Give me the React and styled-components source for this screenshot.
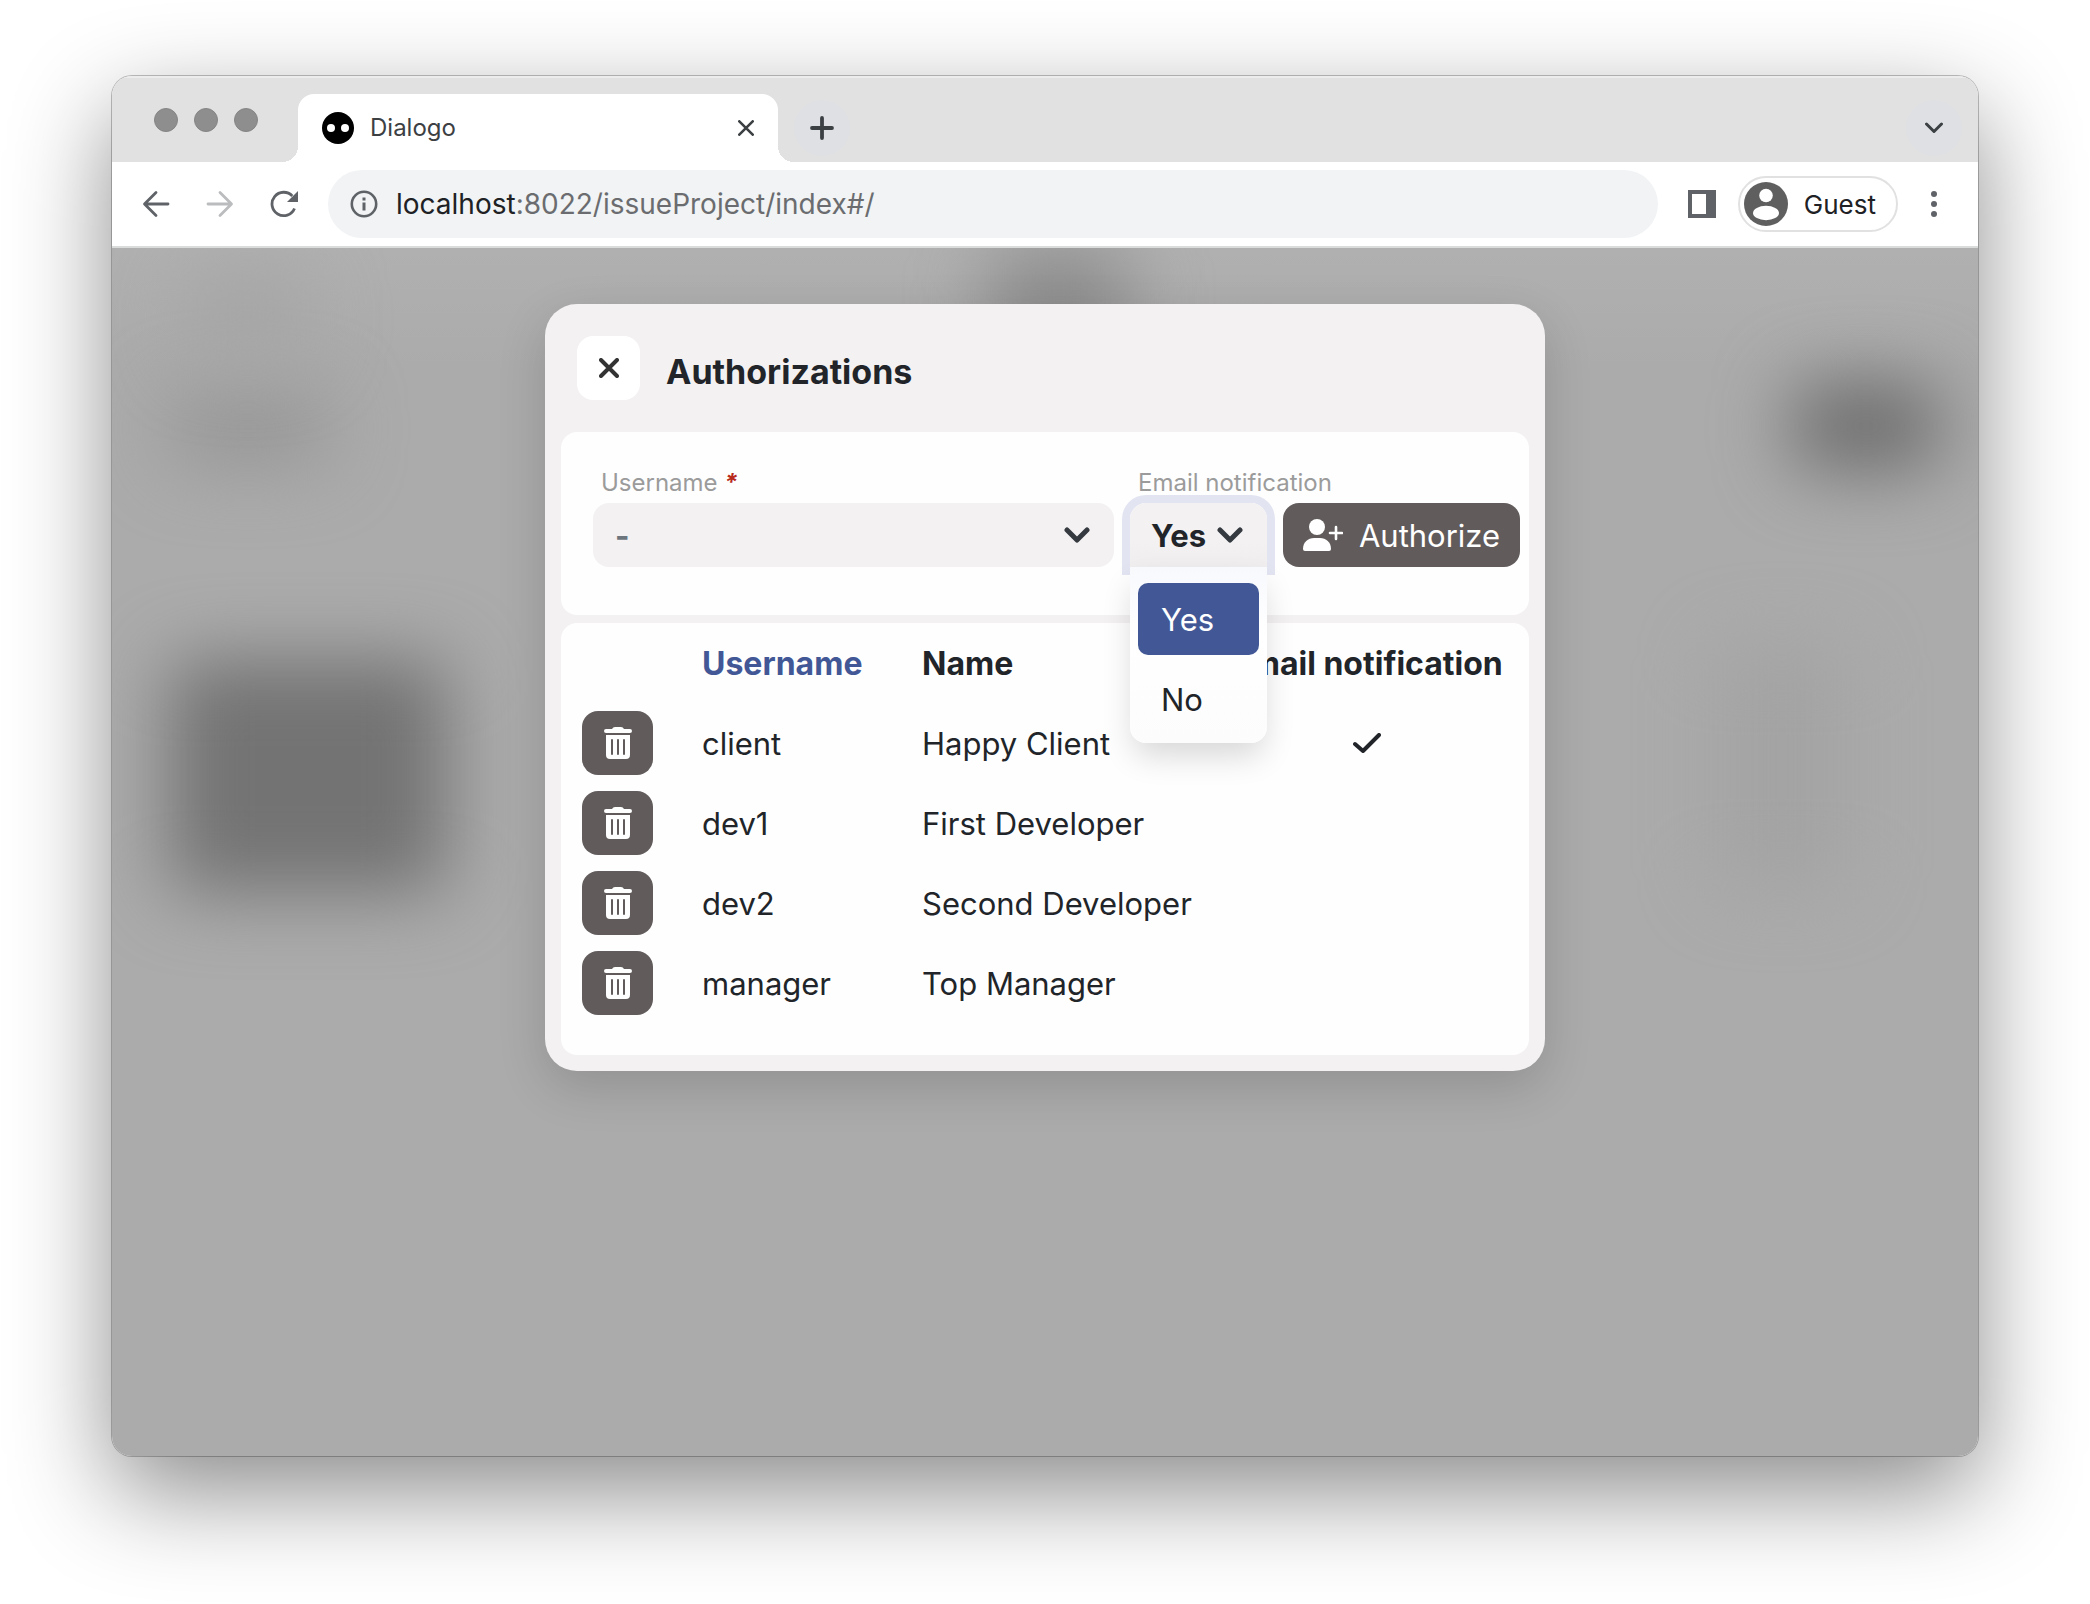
import React, { useState } from "react";
import styled, { createGlobalStyle } from "styled-components";

const GlobalStyle = createGlobalStyle`
  *, *::before, *::after { box-sizing: border-box; }
  body {
    margin: 0;
    background: #fff;
    color: #212529;
    font-family: Inter, "Liberation Sans", sans-serif;
    font-size: 31px;
    line-height: 48px;
  }
  button, select, input { font: inherit; color: inherit; border: 0; margin: 0; padding: 0; background: none; }
  svg { display: block; flex: none; }
`;

const Desktop = styled.div`
  min-height: 100vh;
  padding: 76px 112px 148px;
  display: flex;
  flex-direction: column;
  overflow: hidden;
`;

const Window = styled.div`
  flex: 1;
  display: flex;
  flex-direction: column;
  border-radius: 20px;
  overflow: hidden;
  box-shadow: 0 0 0 1px rgba(0, 0, 0, 0.24), 0 36px 100px rgba(0, 0, 0, 0.46);
`;

const TabStrip = styled.div`
  display: flex;
  align-items: flex-end;
  height: 86px;
  padding-right: 16px;
  background: #e1e1e1;
  box-shadow: inset 0 2px 0 #ececec;
`;

const Lights = styled.div`
  display: flex;
  gap: 16px;
  width: 186px;
  padding: 0 0 30px 42px;
`;

const Light = styled.span`
  width: 24px;
  height: 24px;
  border-radius: 50%;
  background: #8e8e8e;
  border: 1px solid #858585;
`;

const Tab = styled.div`
  position: relative;
  display: flex;
  align-items: center;
  gap: 16px;
  width: 480px;
  height: 68px;
  padding: 0 16px 0 24px;
  border-radius: 16px 16px 0 0;
  background: #fff;
  &::before, &::after {
    content: "";
    position: absolute;
    bottom: 0;
    width: 16px;
    height: 16px;
  }
  &::before { right: 100%; background: radial-gradient(circle at 0 0, transparent 16px, #fff 16px); }
  &::after { left: 100%; background: radial-gradient(circle at 100% 0, transparent 16px, #fff 16px); }
`;

const TabTitle = styled.span`
  flex: 1;
  font-size: 24px;
  color: #3c4043;
`;

const RoundButton = styled.button`
  display: grid;
  place-items: center;
  width: ${(p) => p.$size}px;
  height: ${(p) => p.$size}px;
  border-radius: 50%;
  background: ${(p) => p.$fill || "transparent"};
  color: ${(p) => p.$color || "#5f6368"};
`;

const StripActions = styled.div`
  flex: 1;
  display: flex;
  align-items: center;
  justify-content: space-between;
  height: 68px;
  padding-left: 16px;
`;

const Toolbar = styled.div`
  display: flex;
  align-items: center;
  height: 86px;
  padding: 0 16px 2px;
  background: #fff;
  box-shadow: inset 0 -2px 0 #dadcdc;
`;

const NavButtons = styled.div`
  display: flex;
  gap: 8px;
  margin-right: 16px;
`;

const AddressBar = styled.div`
  flex: 1;
  display: flex;
  align-items: center;
  gap: 18px;
  height: 68px;
  padding: 0 22px;
  border-radius: 34px;
  background: #f1f3f4;
  color: #5f6368;
`;

const Address = styled.span`
  font-size: 28px;
  color: #6b6c6f;
  b { font-weight: 400; color: #202124; }
`;

const ToolbarEnd = styled.div`
  display: flex;
  align-items: center;
  margin-left: 16px;
  gap: 8px;
`;

const Profile = styled.button`
  display: flex;
  align-items: center;
  gap: 16px;
  height: 56px;
  padding: 0 20px 0 4px;
  border: 2px solid #e1e1e1;
  border-radius: 28px;
  font-size: 26px;
  color: #202124;
`;

const Page = styled.main`
  position: relative;
  flex: 1;
  display: flex;
  flex-direction: column;
  align-items: center;
  padding: 56px 32px;
  background: linear-gradient(#b0b0b0, #ababab 120px);
  overflow: hidden;
  isolation: isolate;
`;

const Blob = styled.span`
  position: absolute;
  z-index: -1;
  left: ${(p) => p.$x}%;
  top: ${(p) => p.$y}%;
  width: ${(p) => p.$w}px;
  height: ${(p) => p.$h}px;
  border-radius: 24px;
  background: ${(p) => p.$fill};
  filter: blur(36px);
`;

const Dialog = styled.section`
  width: 1000px;
  max-width: 100%;
  padding: 0 16px 16px;
  border-radius: 32px;
  background: #f3f1f2;
  box-shadow: 0 16px 48px rgba(0, 0, 0, 0.15);
`;

const DialogHeader = styled.header`
  display: flex;
  align-items: center;
  gap: 26px;
  padding: 32px 16px;
`;

const CloseButton = styled.button`
  display: grid;
  place-items: center;
  width: 63px;
  height: 64px;
  border-radius: 16px;
  background: #fff;
  color: #333;
`;

const Title = styled.h1`
  margin: 0;
  padding-top: 8px;
  font-size: 34px;
  font-weight: 700;
  line-height: 48px;
`;

const Card = styled.div`
  border-radius: 16px;
  background: #fefefe;
  padding: ${(p) => p.$pad};
  & + & { margin-top: 8px; }
`;

const FormRow = styled.form`
  display: flex;
  align-items: flex-end;
  gap: 16px;
`;

const Field = styled.div`
  position: relative;
  flex: ${(p) => (p.$grow ? "1" : "none")};
  width: ${(p) => (p.$width ? p.$width + "px" : "auto")};
  min-width: 0;
`;

const FieldLabel = styled.label`
  display: block;
  padding: 0 8px;
  font-size: 24px;
  line-height: 40px;
  color: #9b9b9b;
  white-space: nowrap;
`;

const Required = styled.i`
  font-weight: 700;
  color: #b82a1c;
`;

const SelectBox = styled.div`
  display: flex;
  align-items: center;
  position: relative;
  svg { position: absolute; right: 24px; pointer-events: none; }
`;

const Select = styled.select`
  appearance: none;
  width: 100%;
  height: 64px;
  padding: 2px 56px 0 22px;
  border-radius: 16px;
  background: #f3f1f2;
  color: #6c757d;
  font-weight: 700;
`;

const MenuButton = styled.button`
  display: flex;
  align-items: center;
  justify-content: space-between;
  width: 100%;
  height: 64px;
  padding: 0 24px 0 21px;
  border-radius: 16px 16px 0 0;
  background: linear-gradient(#f3f1f2 60%, #efedee);
  box-shadow: 0 0 0 8px #e2e5f1;
  font-weight: 700;
`;

const ButtonText = styled.span`
  padding-top: 2px;
`;

const Menu = styled.ul`
  position: absolute;
  z-index: 2;
  top: 100%;
  left: 0;
  right: 0;
  display: flex;
  flex-direction: column;
  gap: 8px;
  margin: 0;
  padding: 16px 8px 8px;
  list-style: none;
  border-radius: 0 0 16px 16px;
  background: linear-gradient(#f8f9fd, #fff 40%, #fcfcfc);
  box-shadow: 0 16px 32px -4px rgba(0, 0, 0, 0.16);
`;

const Option = styled.li`
  padding: 13px 23px 11px;
  border-radius: 10px;
  background: ${(p) => (p.$active ? "#425896" : "transparent")};
  color: ${(p) => (p.$active ? "#fff" : "#212529")};
`;

const DarkButton = styled.button`
  display: flex;
  align-items: center;
  justify-content: center;
  gap: 16px;
  height: 64px;
  width: ${(p) => p.$width}px;
  border-radius: 16px;
  background: #615b5b;
  color: #fff;
`;

const Table = styled.table`
  width: 100%;
  border-collapse: collapse;
  table-layout: fixed;
`;

const Row = styled.tr`
  height: 80px;
`;

const Col = styled.col`
  width: ${(p) => (p.$width ? p.$width + "px" : "auto")};
`;

const HeadCell = styled.th`
  padding: 2px 16px 0;
  text-align: ${(p) => (p.$center ? "center" : "left")};
  font-size: 32px;
  font-weight: 700;
  white-space: nowrap;
  color: ${(p) => (p.$sorted ? "#425896" : "#212529")};
`;

const Cell = styled.td`
  padding: ${(p) => (p.$text ? "2px 16px 0" : "0 16px")};
  white-space: nowrap;
  svg { margin: 0 auto; }
`;

const Icon = ({ w = 32, h = w, box, stroke, sw = 2, children }) => (
  <svg width={w} height={h} viewBox={box || `0 0 ${w} ${h}`} fill={stroke ? "none" : "currentColor"}
    stroke={stroke ? "currentColor" : "none"} strokeWidth={sw} strokeLinecap="round" strokeLinejoin="round" aria-hidden="true">
    {children}
  </svg>
);

const Chevron = () => (
  <Icon w={26} h={16} stroke sw={5}><path d="M3 3l10 10 10-10" stroke="#343a40" /></Icon>
);

const TrashIcon = () => (
  <Icon w={28} h={32}>
    <path fillRule="evenodd" d="M2 2H8Q9 0 11 0H17Q19 0 20 2H26A2 2 0 0 1 26 6H2A2 2 0 0 1 2 2Z
      M2 8H26V28A4 4 0 0 1 22 32H6A4 4 0 0 1 2 28Z
      M7 13V27A1 1 0 0 0 9 27V13A1 1 0 0 0 7 13Z M13 13V27A1 1 0 0 0 15 27V13A1 1 0 0 0 13 13Z M19 13V27A1 1 0 0 0 21 27V13A1 1 0 0 0 19 13Z" />
  </Icon>
);

const PersonPlusIcon = () => (
  <Icon w={40} h={32}>
    <circle cx="14" cy="8" r="8" />
    <path d="M2 32Q0 32 0 30C0 23 5 19 11 19H17C23 19 28 23 28 30Q28 32 26 32Z" />
    <path d="M33 8v12M27 14h12" stroke="currentColor" strokeWidth="2.6" />
  </Icon>
);

const users = [
  { username: "client", name: "Happy Client", email: true },
  { username: "dev1", name: "First Developer", email: false },
  { username: "dev2", name: "Second Developer", email: false },
  { username: "manager", name: "Top Manager", email: false },
];

function BrowserChrome() {
  return (
    <>
      <TabStrip>
        <Lights><Light /><Light /><Light /></Lights>
        <Tab>
          <Icon w={32}>
            <circle cx="16" cy="16" r="16" fill="#000" />
            <circle cx="9" cy="16" r="4" fill="#fff" />
            <circle cx="23" cy="16" r="4" fill="#fff" />
          </Icon>
          <TabTitle>Dialogo</TabTitle>
          <RoundButton $size={32} $color="#3c4043" aria-label="Close tab">
            <Icon w={16} stroke sw={2.6}><path d="M1.3 1.3l13.4 13.4M14.7 1.3L1.3 14.7" /></Icon>
          </RoundButton>
        </Tab>
        <StripActions>
          <RoundButton $size={56} $fill="#dee0e4" $color="#3c4043" aria-label="New tab">
            <Icon w={24} stroke sw={3.8}><path d="M12 2v20M2 12h20" /></Icon>
          </RoundButton>
          <RoundButton $size={56} $fill="#dee0e4" $color="#3c4043" aria-label="Search tabs">
            <Icon w={20} h={12} stroke sw={3}><path d="M2.5 2l7.500 7.500L17.500 2" /></Icon>
          </RoundButton>
        </StripActions>
      </TabStrip>
      <Toolbar>
        <NavButtons>
          <RoundButton $size={56} aria-label="Back">
            <Icon w={28} stroke sw={2.8}><path d="M26 14H3M14 2.500L2.500 14 14 25.500" /></Icon>
          </RoundButton>
          <RoundButton $size={56} $color="#babcbe" aria-label="Forward">
            <Icon w={28} stroke sw={2.8}><path d="M2 14h23M14 2.500L25.500 14 14 25.500" /></Icon>
          </RoundButton>
          <RoundButton $size={56} aria-label="Reload">
            <Icon w={28} h={28}>
              <path d="M24.500 18.500A11.700 11.700 0 1 1 22.300 6" fill="none" stroke="currentColor" strokeWidth="2.8" strokeLinecap="butt" />
              <path d="M28 1v11H17z" />
            </Icon>
          </RoundButton>
        </NavButtons>
        <AddressBar>
          <Icon w={28}>
            <circle cx="14" cy="14" r="12.200" fill="none" stroke="currentColor" strokeWidth="2.600" />
            <path d="M12.500 7.500h3v3h-3zM12.500 12.500h3v8h-3z" />
          </Icon>
          <Address><b>localhost</b>:8022/issueProject/index#/</Address>
        </AddressBar>
        <ToolbarEnd>
          <RoundButton $size={56} aria-label="Side panel">
            <Icon w={28}><path fillRule="evenodd" d="M0 0H28V28H0ZM4 4V24H18V4Z" /></Icon>
          </RoundButton>
          <Profile>
            <Icon w={44}>
              <circle cx="22" cy="22" r="22" fill="#5f5f5f" />
              <circle cx="22" cy="13.500" r="6.800" fill="#fff" />
              <ellipse cx="22" cy="31" rx="13" ry="7.200" fill="#fff" />
            </Icon>
            <ButtonText>Guest</ButtonText>
          </Profile>
          <RoundButton $size={56} aria-label="Menu">
            <Icon w={6} h={26}><circle cx="3" cy="3" r="3" /><circle cx="3" cy="13" r="3" /><circle cx="3" cy="23" r="3" /></Icon>
          </RoundButton>
        </ToolbarEnd>
      </Toolbar>
    </>
  );
}

export default function App() {
  const [email, setEmail] = useState("Yes");
  return (
    <Desktop>
      <GlobalStyle />
      <Window>
        <BrowserChrome />
        <Page>
          <Blob $x={3} $y={34} $w={280} $h={234} $fill="#737373" />
          <Blob $x={90} $y={11} $w={150} $h={90} $fill="#6e6e6e" />
          <Blob $x={47} $y={0} $w={140} $h={120} $fill="#8c8c8c" />
          <Blob $x={3} $y={12} $w={160} $h={70} $fill="#959595" />
          <Blob $x={4} $y={2} $w={120} $h={90} $fill="#a5a5a5" />
          <Blob $x={86} $y={33} $w={130} $h={240} $fill="#a3a3a3" />
          <Dialog role="dialog" aria-labelledby="dialog-title">
            <DialogHeader>
              <CloseButton aria-label="Close">
                <Icon w={20} stroke sw={4}><path d="M2 2l16 16M18 2L2 18" /></Icon>
              </CloseButton>
              <Title id="dialog-title">Authorizations</Title>
            </DialogHeader>
            <Card $pad="31px 9px 48px 32px">
              <FormRow onSubmit={(e) => e.preventDefault()}>
                <Field $grow>
                  <FieldLabel htmlFor="username">Username <Required>*</Required></FieldLabel>
                  <SelectBox>
                    <Select id="username" defaultValue=""><option value="">-</option></Select>
                    <Chevron />
                  </SelectBox>
                </Field>
                <Field $width={137}>
                  <FieldLabel htmlFor="email">Email notification</FieldLabel>
                  <MenuButton type="button" id="email" aria-haspopup="listbox" aria-expanded="true">
                    <ButtonText>{email}</ButtonText><Chevron />
                  </MenuButton>
                  <Menu role="listbox" aria-label="Email notification">
                    {["Yes", "No"].map((v) => (
                      <Option key={v} role="option" aria-selected={v === email} $active={v === email} onClick={() => setEmail(v)}>{v}</Option>
                    ))}
                  </Menu>
                </Field>
                <DarkButton type="submit" $width={237}><PersonPlusIcon /><ButtonText>Authorize</ButtonText></DarkButton>
              </FormRow>
            </Card>
            <Card $pad="0 9px 32px 5px">
              <Table>
                <colgroup><Col $width={120} /><Col $width={220} /><Col /><Col $width={306} /></colgroup>
                <thead>
                  <Row>
                    <HeadCell aria-label="Actions" />
                    <HeadCell $sorted>Username</HeadCell>
                    <HeadCell>Name</HeadCell>
                    <HeadCell $center>Email notification</HeadCell>
                  </Row>
                </thead>
                <tbody>
                  {users.map((u) => (
                    <Row key={u.username}>
                      <Cell><DarkButton $width={71} aria-label={`Remove ${u.username}`}><TrashIcon /></DarkButton></Cell>
                      <Cell $text>{u.username}</Cell>
                      <Cell $text>{u.name}</Cell>
                      <Cell>{u.email && <Icon w={28} h={20} stroke sw={4}><path d="M2 11l8 7L26 2" /></Icon>}</Cell>
                    </Row>
                  ))}
                </tbody>
              </Table>
            </Card>
          </Dialog>
        </Page>
      </Window>
    </Desktop>
  );
}
